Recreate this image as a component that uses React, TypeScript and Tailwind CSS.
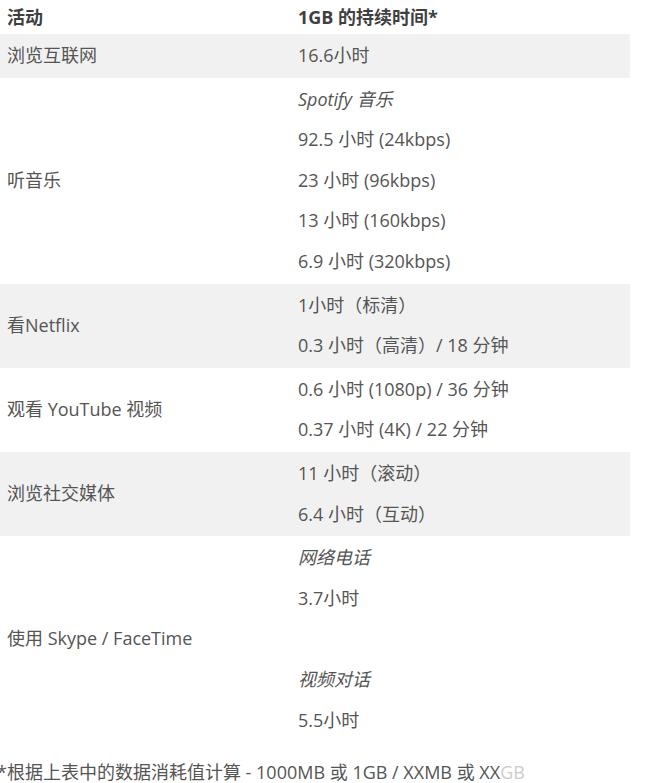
import React from "react";

type Line = { text: string; italic?: boolean; gapBefore?: boolean };
type Row = { label: string; lines: Line[]; shaded?: boolean };

const rows: Row[] = [
  { label: "浏览互联网", lines: [{ text: "16.6小时" }], shaded: true },
  {
    label: "听音乐",
    lines: [
      { text: "Spotify 音乐", italic: true },
      { text: "92.5 小时 (24kbps)" },
      { text: "23 小时 (96kbps)" },
      { text: "13 小时 (160kbps)" },
      { text: "6.9 小时 (320kbps)" },
    ],
  },
  {
    label: "看Netflix",
    lines: [{ text: "1小时（标清）" }, { text: "0.3 小时（高清）/ 18 分钟" }],
    shaded: true,
  },
  {
    label: "观看 YouTube 视频",
    lines: [{ text: "0.6 小时 (1080p) / 36 分钟" }, { text: "0.37 小时 (4K) / 22 分钟" }],
  },
  {
    label: "浏览社交媒体",
    lines: [{ text: "11 小时（滚动）" }, { text: "6.4 小时（互动）" }],
    shaded: true,
  },
  {
    label: "使用 Skype / FaceTime",
    lines: [
      { text: "网络电话", italic: true },
      { text: "3.7小时" },
      { text: "视频对话", italic: true, gapBefore: true },
      { text: "5.5小时" },
    ],
  },
];

export default function App() {
  return (
    <div
      className="w-[659px] h-[783px] overflow-hidden bg-white text-[18px] text-[#555]"
      style={{ fontFamily: '"Open Sans", "Noto Sans CJK SC", sans-serif' }}
    >
      <div className="w-[630px]">
        <div className="flex h-[34px] items-center font-bold text-[#3f3f3f]">
          <div className="w-[298px] pl-[7px]">活动</div>
          <div className="flex-1">1GB 的持续时间*</div>
        </div>
        {rows.map((row) => (
          <div
            key={row.label}
            className={`flex items-center pt-[1px] pb-[2px] ${row.shaded ? "bg-[#f1f1f1]" : ""}`}
          >
            <div className="w-[298px] pl-[7px]">{row.label}</div>
            <div className="flex-1">
              {row.lines.map((line) => (
                <div
                  key={line.text}
                  className={`h-[40.6px] leading-[40.6px] ${line.italic ? "italic" : ""} ${line.gapBefore ? "mt-[41px]" : ""}`}
                >
                  {line.text}
                </div>
              ))}
            </div>
          </div>
        ))}
      </div>
      <p className="mt-[17px] ml-[-3px] leading-[24px] whitespace-nowrap">
        *根据上表中的数据消耗值计算 - 1000MB 或 1GB / XXMB 或 XX<span className="text-[#ccc]">GB</span>
      </p>
    </div>
  );
}
